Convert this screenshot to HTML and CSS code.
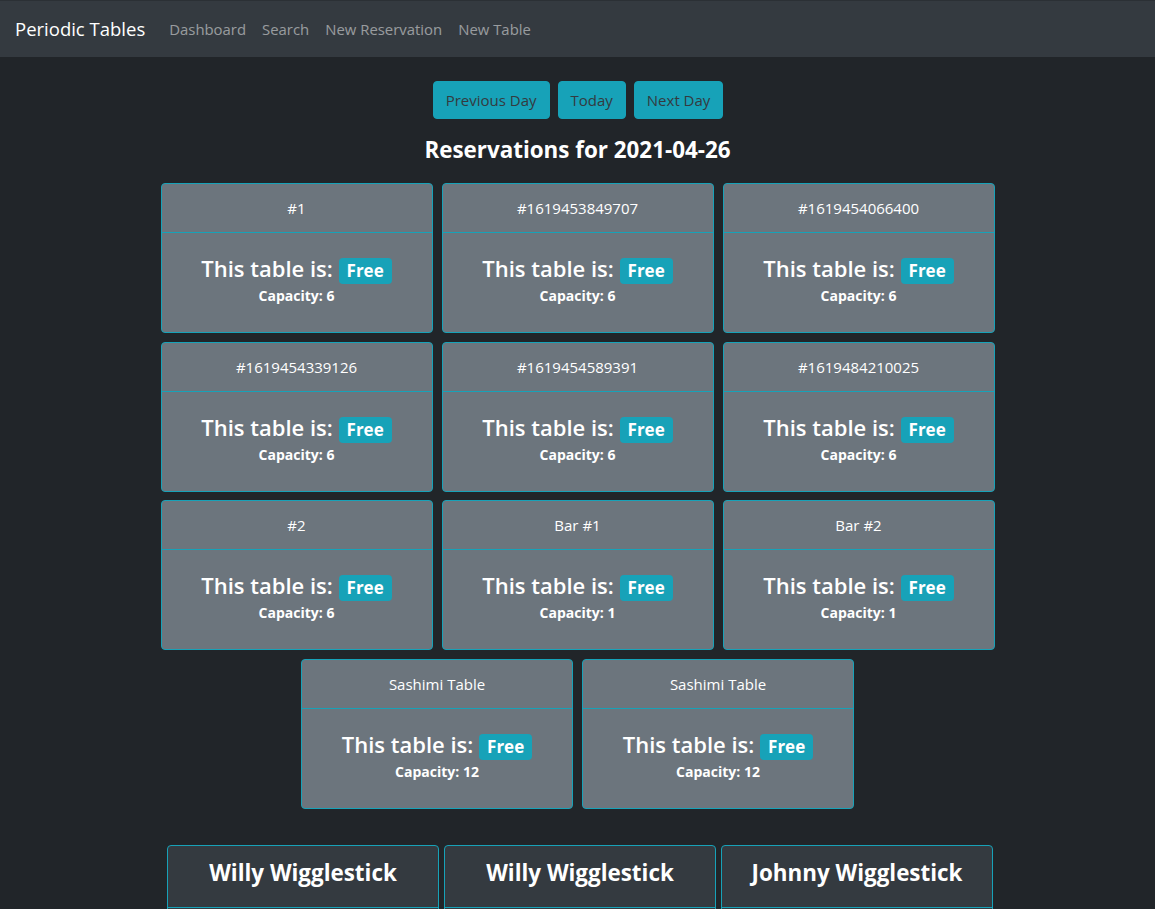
FILE: index.html
```html
<!DOCTYPE html>
<html lang="en">
<head>
<meta charset="utf-8">
<title>Periodic Tables</title>
<link rel="stylesheet" href="styles.css">
</head>
<body>
<nav class="navbar">
  <a class="brand" href="#">Periodic Tables</a>
  <a class="nav-link" href="#">Dashboard</a>
  <a class="nav-link" href="#">Search</a>
  <a class="nav-link" href="#">New Reservation</a>
  <a class="nav-link" href="#">New Table</a>
</nav>
<main class="main">
  <div class="day-buttons">
    <button class="btn">Previous Day</button>
    <button class="btn">Today</button>
    <button class="btn">Next Day</button>
  </div>
  <h4 class="page-title">Reservations for 2021-04-26</h4>
  <div class="tables">
    <div class="table-card"><div class="card-header">#1</div><div class="card-body"><h4 class="status">This table is: <span class="badge">Free</span></h4><div class="capacity">Capacity: 6</div></div></div>
    <div class="table-card"><div class="card-header">#1619453849707</div><div class="card-body"><h4 class="status">This table is: <span class="badge">Free</span></h4><div class="capacity">Capacity: 6</div></div></div>
    <div class="table-card"><div class="card-header">#1619454066400</div><div class="card-body"><h4 class="status">This table is: <span class="badge">Free</span></h4><div class="capacity">Capacity: 6</div></div></div>
    <div class="table-card"><div class="card-header">#1619454339126</div><div class="card-body"><h4 class="status">This table is: <span class="badge">Free</span></h4><div class="capacity">Capacity: 6</div></div></div>
    <div class="table-card"><div class="card-header">#1619454589391</div><div class="card-body"><h4 class="status">This table is: <span class="badge">Free</span></h4><div class="capacity">Capacity: 6</div></div></div>
    <div class="table-card"><div class="card-header">#1619484210025</div><div class="card-body"><h4 class="status">This table is: <span class="badge">Free</span></h4><div class="capacity">Capacity: 6</div></div></div>
    <div class="table-card"><div class="card-header">#2</div><div class="card-body"><h4 class="status">This table is: <span class="badge">Free</span></h4><div class="capacity">Capacity: 6</div></div></div>
    <div class="table-card"><div class="card-header">Bar #1</div><div class="card-body"><h4 class="status">This table is: <span class="badge">Free</span></h4><div class="capacity">Capacity: 1</div></div></div>
    <div class="table-card"><div class="card-header">Bar #2</div><div class="card-body"><h4 class="status">This table is: <span class="badge">Free</span></h4><div class="capacity">Capacity: 1</div></div></div>
    <div class="table-card"><div class="card-header">Sashimi Table</div><div class="card-body"><h4 class="status">This table is: <span class="badge">Free</span></h4><div class="capacity">Capacity: 12</div></div></div>
    <div class="table-card"><div class="card-header">Sashimi Table</div><div class="card-body"><h4 class="status">This table is: <span class="badge">Free</span></h4><div class="capacity">Capacity: 12</div></div></div>
  </div>
  <div class="reservations">
    <div class="res-card"><div class="res-header"><h4>Willy Wigglestick</h4></div><div class="res-body"><p>Party of 2</p><p>Status: booked</p></div></div>
    <div class="res-card"><div class="res-header"><h4>Willy Wigglestick</h4></div><div class="res-body"><p>Party of 2</p><p>Status: booked</p></div></div>
    <div class="res-card"><div class="res-header"><h4>Johnny Wigglestick</h4></div><div class="res-body"><p>Party of 4</p><p>Status: booked</p></div></div>
  </div>
</main>
</body>
</html>
```
FILE: styles.css
```css
* { box-sizing: border-box; }
html, body { margin: 0; padding: 0; }
body {
  background: #212529;
  color: #fff;
  font-family: "Segoe UI", "Open Sans", "Noto Sans", sans-serif;
  font-size: 16px;
  line-height: 1.5;
}
.navbar {
  display: flex;
  align-items: center;
  background: #343a40;
  height: 57px;
  padding: 0 16px 0 15px;
  border-top: 1px solid #2b3035;
}
.brand {
  color: #fff;
  font-size: 18.5px;
  text-decoration: none;
  margin-right: 16px;
}
.nav-link {
  color: rgba(255,255,255,.5);
  text-decoration: none;
  padding: 0 8px;
  font-size: 14.9px;
}
.main {
  display: flex;
  flex-direction: column;
  align-items: center;
  padding-top: 24px;
}
.day-buttons {
  display: flex;
  gap: 8px;
  margin-left: 1px;
}
.btn {
  background: #17a2b8;
  border: 1px solid #17a2b8;
  color: #343a40;
  font-family: inherit;
  font-size: 15px;
  line-height: 24px;
  padding: 6px 12px;
  border-radius: 4px;
}
.page-title {
  font-size: 22.4px;
  font-weight: 700;
  line-height: 29px;
  margin: 16px 0 19px;
}
.tables {
  display: flex;
  flex-wrap: wrap;
  justify-content: center;
  gap: 8.6px 9px;
  width: 840px;
}
.table-card {
  width: 272px;
  height: 150px;
  background: #6c757d;
  border: 1px solid #17a2b8;
  border-radius: 4px;
  text-align: center;
  display: flex;
  flex-direction: column;
}
.card-header {
  height: 49px;
  line-height: 48px;
  border-bottom: 1px solid #17a2b8;
  font-size: 15px;
}
.card-body {
  padding-top: 21px;
}
.status {
  margin: 0 0 2px;
  height: 29px;
  font-size: 22px;
  font-weight: 600;
  line-height: 29px;
}
.badge {
  display: inline-block;
  background: #17a2b8;
  color: #fff;
  font-size: 17px;
  font-weight: 700;
  line-height: 1;
  padding: 4px 8px 5px;
  border-radius: 4px;
  vertical-align: 0;
}
.capacity {
  font-size: 14px;
  font-weight: 700;
  line-height: 21px;
}
.reservations {
  display: flex;
  justify-content: center;
  gap: 5px;
  margin: 36px 0 0 5px;
}
.res-card {
  width: 272px;
  background: #343a40;
  border: 1px solid #17a2b8;
  border-radius: 4px;
  text-align: center;
}
.res-header {
  padding: 12px 20px;
  border-bottom: 1px solid #17a2b8;
}
.res-header h4 {
  margin: 0 0 8px;
  font-size: 22.4px;
  font-weight: 700;
  line-height: 29px;
}
.res-body {
  padding: 20px;
}
.res-body p { margin: 0 0 8px; }
```
